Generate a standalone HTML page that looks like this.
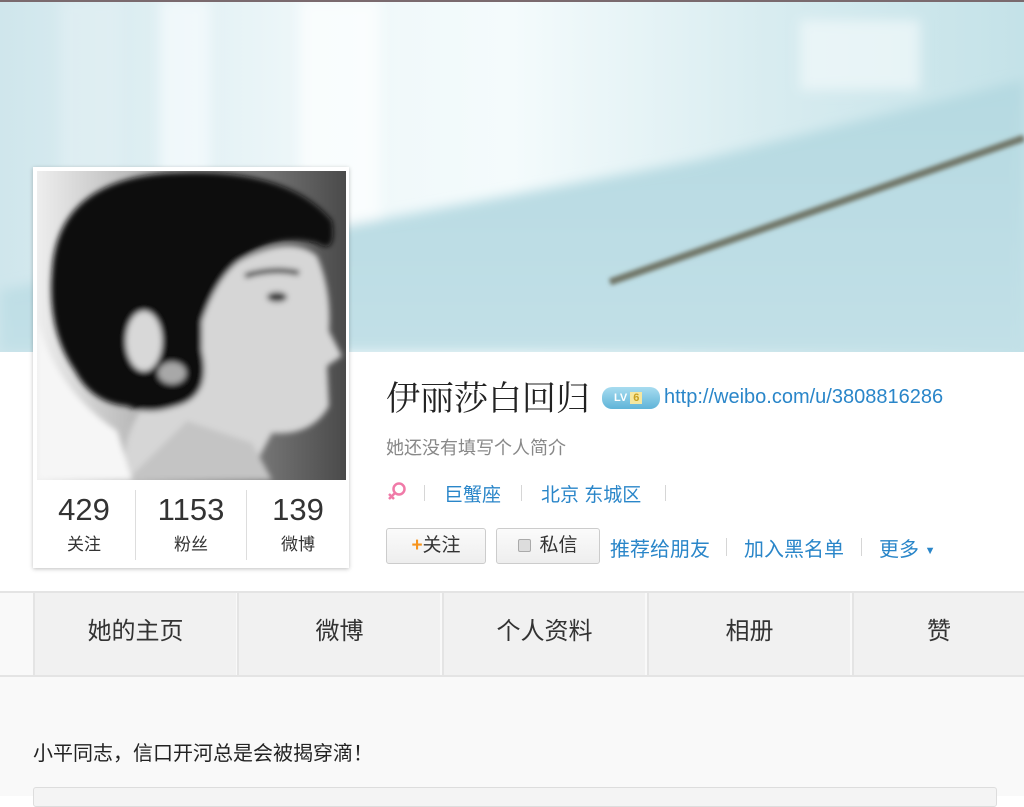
<!DOCTYPE html>
<html><head><meta charset="utf-8"><style>
*{margin:0;padding:0;box-sizing:border-box}
body{width:1024px;height:796px;overflow:hidden;background:#fff;font-family:"Liberation Sans","Noto Sans CJK SC",sans-serif;position:relative}
.abs{position:absolute}
.blue{color:#2a86c9}
.sep{position:absolute;width:1px;background:#d6d6d6}
.btn{position:absolute;height:36px;top:528px;border:1px solid #ccc;border-radius:3px;background:linear-gradient(#fbfbfb,#eee);font-size:19px;color:#333;line-height:34px;text-align:center}
.tab{position:absolute;top:593px;height:83px;width:203px;background:#f1f1f1;border-left:2px solid #e4e4e4;font-size:24px;color:#333;text-align:center;line-height:78px}
</style></head><body>
<svg class="abs" style="left:0;top:0" width="1024" height="352">
<defs>
<linearGradient id="bg" x1="0" y1="0" x2="1" y2="0"><stop offset="0" stop-color="#cfe6ec"/><stop offset="0.3" stop-color="#eef7f9"/><stop offset="0.5" stop-color="#f4fbfc"/><stop offset="0.75" stop-color="#d8ecf0"/><stop offset="1" stop-color="#c4e2e8"/></linearGradient>
<linearGradient id="lo" x1="0" y1="0" x2="0" y2="1"><stop offset="0" stop-color="#b5d9e1"/><stop offset="1" stop-color="#c2e0e7"/></linearGradient>
<filter id="bl"><feGaussianBlur stdDeviation="6"/></filter>
<filter id="bl2"><feGaussianBlur stdDeviation="2"/></filter>
</defs>
<rect width="1024" height="352" fill="url(#bg)"/>
<g filter="url(#bl)">
<rect x="60" y="0" width="60" height="352" fill="#e2f0f3" opacity=".6"/>
<rect x="160" y="0" width="50" height="352" fill="#f7fcfd" opacity=".7"/>
<rect x="300" y="0" width="80" height="352" fill="#fdffff" opacity=".7"/>
<polygon points="0,290 700,160 1024,80 1024,352 0,352" fill="url(#lo)"/>
<rect x="800" y="20" width="120" height="70" fill="#f2fafb" opacity=".7"/>
</g>
<line x1="610" y1="282" x2="1024" y2="138" stroke="#6f7466" stroke-width="7" filter="url(#bl2)"/>
<rect width="1024" height="2" fill="#7a6a6e"/>
</svg>
<div class="abs" style="left:33px;top:167px;width:316px;height:401px;background:#fff;box-shadow:0 1px 4px rgba(0,0,0,.25)"></div>
<svg class="abs" style="left:37px;top:171px" width="309" height="309">
<defs><linearGradient id="pb" x1="0" y1="0" x2="1" y2="0"><stop offset="0" stop-color="#eeeeee"/><stop offset=".5" stop-color="#9a9a9a"/><stop offset="1" stop-color="#4a4a4a"/></linearGradient>
<filter id="pf"><feGaussianBlur stdDeviation="3"/></filter></defs>
<rect width="309" height="309" fill="url(#pb)"/>
<g filter="url(#pf)">
<path d="M185,100 Q250,60 280,85 Q295,120 292,160 L305,185 L290,195 L292,235 Q275,265 235,262 L210,309 L90,309 Q80,270 110,230 L140,150 Z" fill="#d6d6d6"/>
<path d="M90,309 Q120,280 150,250 L215,272 L235,309 Z" fill="#c4c4c4"/>
<path d="M0,309 L0,150 Q20,220 80,260 L95,309 Z" fill="#f6f6f6"/>
<path d="M15,100 Q20,10 130,2 Q250,-5 295,50 Q300,85 280,72 Q240,62 205,88 Q180,105 165,150 L165,180 Q175,225 140,235 Q110,245 90,235 Q55,232 38,200 Q10,160 15,100 Z" fill="#0e0e0e"/>
<ellipse cx="107" cy="170" rx="18" ry="30" fill="#d8d8d8"/>
<ellipse cx="135" cy="202" rx="14" ry="11" fill="#a8a8a8"/>
<path d="M208,105 Q235,96 262,102" stroke="#222" stroke-width="5" fill="none"/>
<ellipse cx="240" cy="126" rx="10" ry="5" fill="#333"/>
</g>
</svg>
<div class="abs" style="left:33px;top:490px;width:316px;text-align:center;font-size:0">
<div class="abs" style="left:102px;top:0;width:1px;height:70px;background:#ddd"></div>
<div class="abs" style="left:213px;top:0;width:1px;height:70px;background:#ddd"></div>
<div class="abs" style="left:0;width:102px;top:0"><div style="font-size:31px;color:#333;line-height:40px">429</div><div style="font-size:17px;color:#333">关注</div></div>
<div class="abs" style="left:103px;width:110px;top:0"><div style="font-size:31px;color:#333;line-height:40px">1153</div><div style="font-size:17px;color:#333">粉丝</div></div>
<div class="abs" style="left:214px;width:102px;top:0"><div style="font-size:31px;color:#333;line-height:40px">139</div><div style="font-size:17px;color:#333">微博</div></div>
</div>
<div class="abs" style="left:386px;top:374px;font-size:34px;color:#222;font-family:'Noto Serif CJK SC',serif;line-height:44px">伊丽莎白回归</div>
<div class="abs" style="left:602px;top:387px;width:58px;height:22px;border-radius:10px;background:linear-gradient(#a8dcf0,#5fb4d8);color:#fff;font-size:11px;font-weight:bold;line-height:22px;padding-left:12px">LV <span style="background:#f5e7a0;color:#c8a020;padding:0 3px">6</span></div>
<div class="abs blue" style="left:664px;top:386px;font-size:20px">http://weibo.com/u/3808816286</div>
<div class="abs" style="left:386px;top:434px;font-size:18px;color:#888">她还没有填写个人简介</div>
<svg class="abs" style="left:386px;top:481px" width="22" height="22"><circle cx="13" cy="8" r="5.5" fill="none" stroke="#f07aa8" stroke-width="2.5"/><path d="M9,12 L3,18 M3,13 L8,18" stroke="#f07aa8" stroke-width="2.5"/></svg>
<div class="sep" style="left:424px;top:485px;height:16px"></div>
<div class="abs blue" style="left:444px;top:480px;font-size:19px">巨蟹座</div>
<div class="sep" style="left:521px;top:485px;height:16px"></div>
<div class="abs blue" style="left:541px;top:480px;font-size:19px">北京 东城区</div>
<div class="sep" style="left:665px;top:485px;height:16px"></div>
<div class="btn" style="left:386px;width:100px"><span style="color:#f7941d;font-weight:bold">+</span>关注</div>
<div class="btn" style="left:496px;width:104px"><span style="display:inline-block;width:13px;height:13px;border:1px solid #aaa;border-radius:2px;background:#ddd;vertical-align:-1px;margin-right:8px"></span>私信</div>
<div class="abs blue" style="left:610px;top:533px;font-size:20px">推荐给朋友</div>
<div class="sep" style="left:726px;top:538px;height:18px"></div>
<div class="abs blue" style="left:744px;top:533px;font-size:20px">加入黑名单</div>
<div class="sep" style="left:861px;top:538px;height:18px"></div>
<div class="abs blue" style="left:879px;top:533px;font-size:20px">更多 <span style="font-size:11px;vertical-align:2px">▼</span></div>
<div class="abs" style="left:0;top:591px;width:1024px;height:205px;background:#f9f9f9;border-top:2px solid #e4e4e4"></div>
<div class="tab" style="left:33px">她的主页</div>
<div class="tab" style="left:237px">微博</div>
<div class="tab" style="left:442px">个人资料</div>
<div class="tab" style="left:647px">相册</div>
<div class="tab" style="left:852px;width:172px">赞</div>
<div class="abs" style="left:0;top:675px;width:1024px;height:2px;background:#e4e4e4"></div>
<div class="abs" style="left:33px;top:737px;font-size:20px;color:#222">小平同志，信口开河总是会被揭穿滴！</div>
<div class="abs" style="left:33px;top:787px;width:964px;height:20px;border:1px solid #ddd;border-radius:3px;background:#f4f4f4"></div>
</body></html>
